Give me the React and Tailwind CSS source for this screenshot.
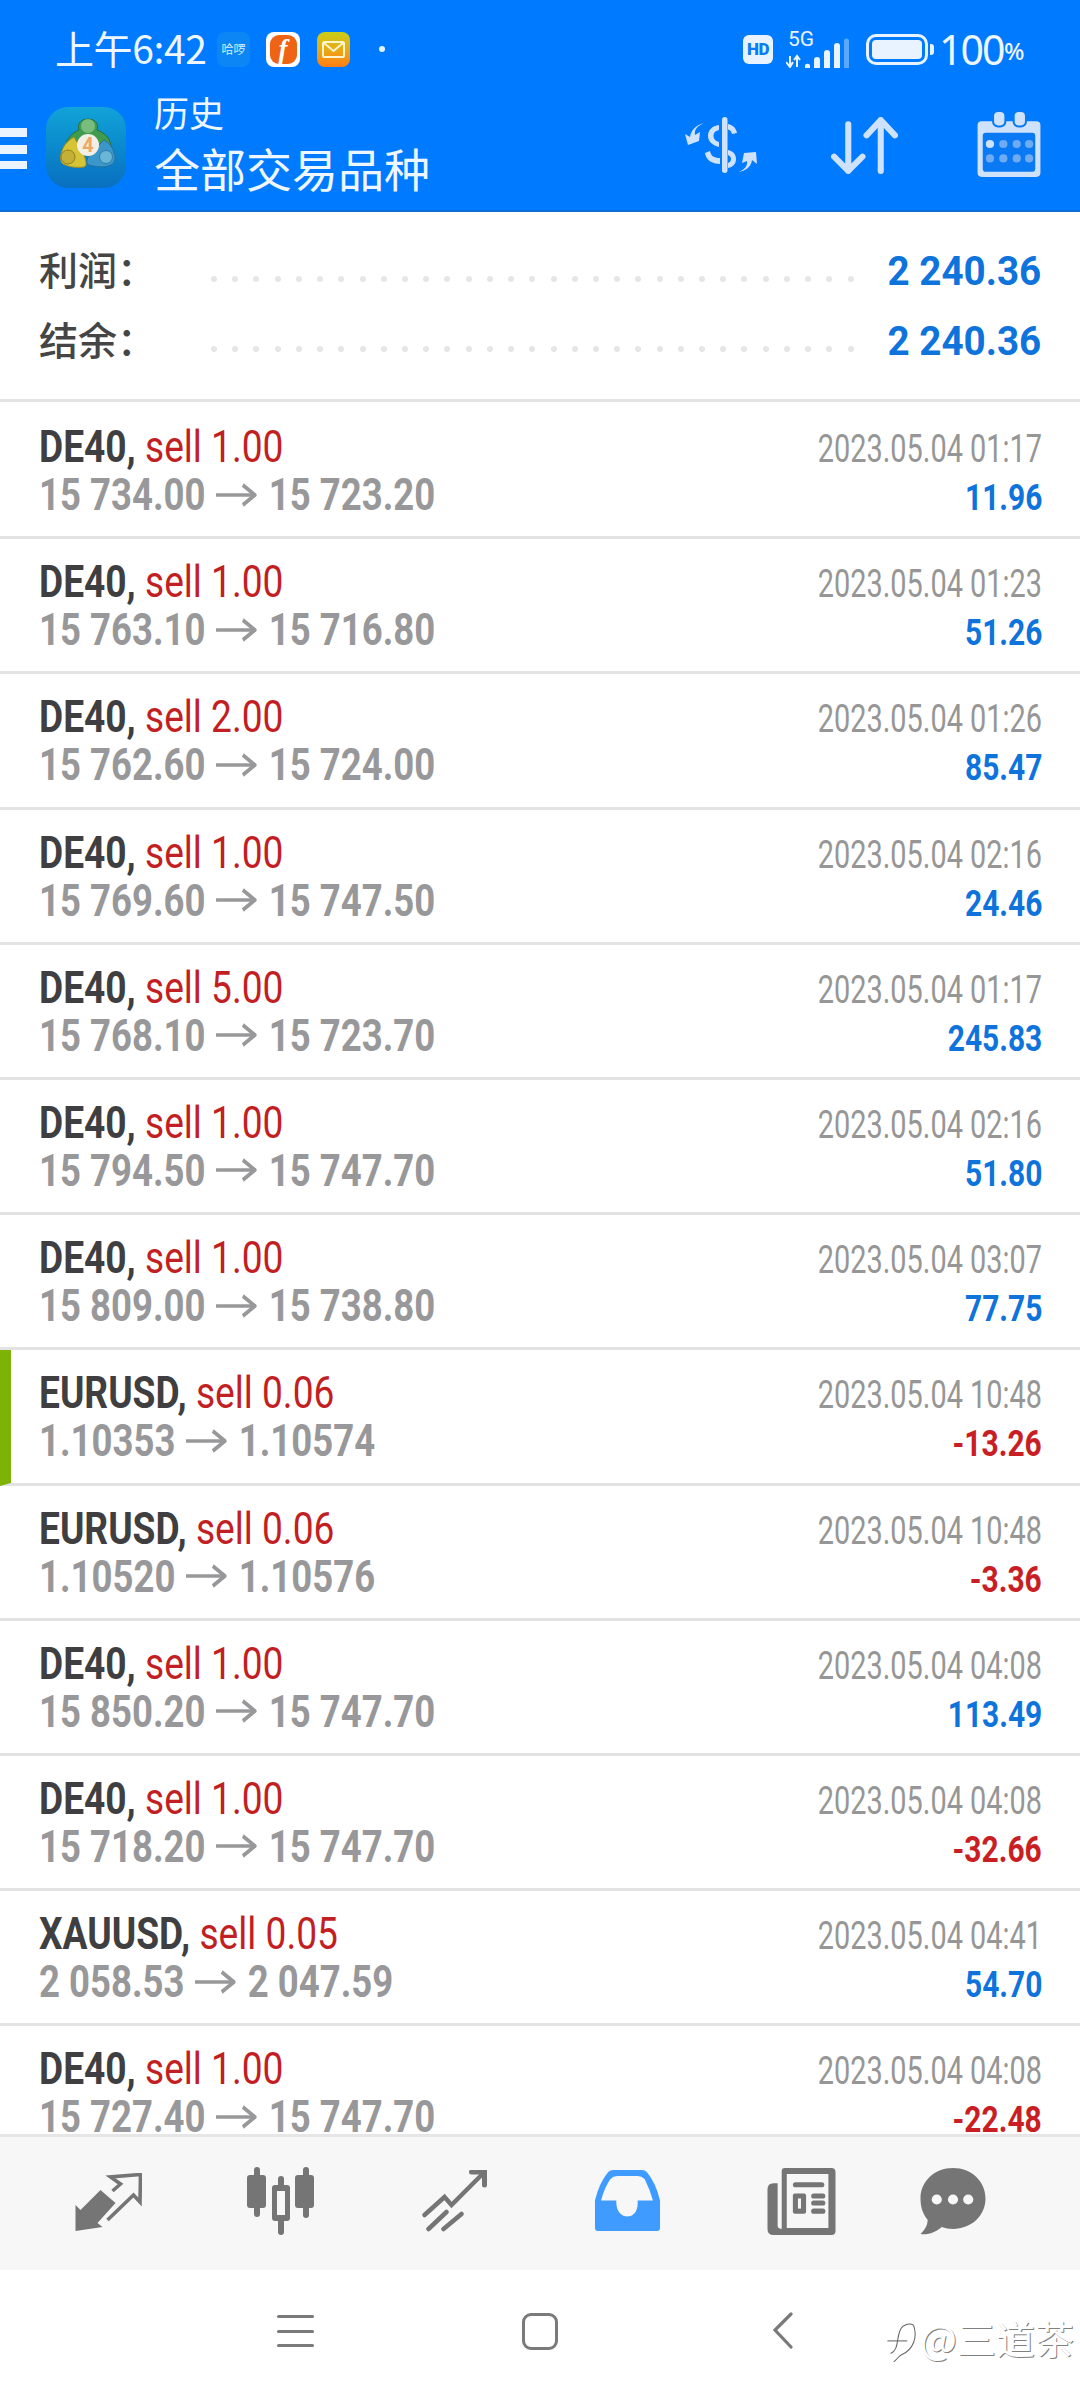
import React from "react";

const ROWS = [
  ["DE40", "sell 1.00", "15 734.00", "15 723.20", "2023.05.04 01:17", "11.96"],
  ["DE40", "sell 1.00", "15 763.10", "15 716.80", "2023.05.04 01:23", "51.26"],
  ["DE40", "sell 2.00", "15 762.60", "15 724.00", "2023.05.04 01:26", "85.47"],
  ["DE40", "sell 1.00", "15 769.60", "15 747.50", "2023.05.04 02:16", "24.46"],
  ["DE40", "sell 5.00", "15 768.10", "15 723.70", "2023.05.04 01:17", "245.83"],
  ["DE40", "sell 1.00", "15 794.50", "15 747.70", "2023.05.04 02:16", "51.80"],
  ["DE40", "sell 1.00", "15 809.00", "15 738.80", "2023.05.04 03:07", "77.75"],
  ["EURUSD", "sell 0.06", "1.10353", "1.10574", "2023.05.04 10:48", "-13.26", true],
  ["EURUSD", "sell 0.06", "1.10520", "1.10576", "2023.05.04 10:48", "-3.36"],
  ["DE40", "sell 1.00", "15 850.20", "15 747.70", "2023.05.04 04:08", "113.49"],
  ["DE40", "sell 1.00", "15 718.20", "15 747.70", "2023.05.04 04:08", "-32.66"],
  ["XAUUSD", "sell 0.05", "2 058.53", "2 047.59", "2023.05.04 04:41", "54.70"],
  ["DE40", "sell 1.00", "15 727.40", "15 747.70", "2023.05.04 04:08", "-22.48"],
];

const CJK = "font-['Noto_Sans_CJK_SC','Noto_Sans',sans-serif]";

function Arrow() {
  return (
    <svg width="50" height="24" viewBox="0 0 50 24" className="ml-[13px] mr-[15px] shrink-0" fill="none" stroke="#98989a" strokeWidth="3.6">
      <path d="M0 12H47" />
      <path d="M33 2L48 12L33 22" strokeWidth="4" />
    </svg>
  );
}

function Row({ r }) {
  const [sym, side, a, b, date, val, mark] = r;
  const neg = val.startsWith("-");
  return (
    <div className={`flex justify-between shrink-0 h-[135.2px] border-b-[3px] border-[#e3e3e3] pr-[38px] pt-[19px] ${mark ? "border-l-[11px] border-l-[#7cb305] pl-[28px]" : "pl-[39px]"}`}>
      <div className="flex flex-col">
        <div className="origin-left scale-x-[0.825] whitespace-nowrap text-[45px] leading-[47px] h-[47px]">
          <span className="font-bold text-[#3f3f41]">{sym}, </span>
          <span className="text-[#c21f24]">{side}</span>
        </div>
        <div className="origin-left scale-x-[0.812] mt-[1px] flex items-center whitespace-nowrap text-[45px] leading-[47px] h-[47px] font-bold text-[#98989a]">
          <span>{a}</span>
          <Arrow />
          <span>{b}</span>
        </div>
      </div>
      <div className="flex flex-col items-end mt-[3px]">
        <div className="origin-right scale-x-[0.76] whitespace-nowrap text-[38px] leading-[47px] h-[47px] text-[#969696]">{date}</div>
        <div className={`origin-right scale-x-[0.82] whitespace-nowrap text-[36.5px] leading-[47px] h-[47px] mt-[1px] font-bold ${neg ? "text-[#c81e24]" : "text-[#0f73dc]"}`}>{val}</div>
      </div>
    </div>
  );
}

function SummaryRow({ label }) {
  return (
    <div className="flex items-center h-[70px]">
      <div className={`${CJK} w-[172px] shrink-0 -mt-[6px] text-[39px] leading-[70px] font-medium text-[#454545]`}>{label}：</div>
      <div className="w-[643px] shrink-0 flex justify-between mt-[16px]">
        {Array.from({ length: 31 }, (_, i) => (
          <span key={i} className="w-[6px] h-[6px] rounded-full bg-[#e6e6e6]" />
        ))}
      </div>
      <div className="ml-auto mt-[2px] origin-right scale-x-[0.965] text-[40px] leading-[70px] font-bold text-[#0f73dc] whitespace-nowrap">2 240.36</div>
    </div>
  );
}

function Logo() {
  return (
    <div className="relative w-[80px] h-[81px] rounded-[22px] bg-gradient-to-b from-[#12a3d8] to-[#0a6fc0] overflow-hidden shrink-0">
      <svg width="80" height="81" viewBox="0 0 80 81" className="absolute left-0 top-0">
        <path d="M42 12c8 0 11 6 9 11 8 3 13 8 14 16l-14 0-9-2-10 2-12-1c1-7 6-12 13-15-2-5 1-11 9-11z" fill="#3f9b4e" stroke="#2a6f39" strokeWidth="1" />
        <circle cx="42" cy="19" r="7" fill="#78bd7c" />
        <path d="M28 30c-5 3-10 7-12 14 -2 4-2 11 1 13 6 3 13 4 21 3 4-1 2-8-2-16z" fill="#d5c435" stroke="#9b8a26" strokeWidth="1" />
        <circle cx="22" cy="50" r="7" fill="#c4b035" stroke="#8f7f22" strokeWidth="1" />
        <path d="M58 33c5 3 9 7 10 13 2 5 1 10-3 12-7 3-15 2-22 0-4-1-2-8 2-12z" fill="#3b97c9" stroke="#24709f" strokeWidth="1" />
        <circle cx="60" cy="50" r="6.5" fill="#69b6d6" stroke="#2f7ea8" strokeWidth="1" />
        <circle cx="42" cy="38" r="11" fill="#f4efe6" />
      </svg>
      <span className="absolute left-[2px] right-[-2px] top-[27px] text-center text-[20px] leading-[22px] font-bold text-[#eda866] font-['Roboto',sans-serif]">4</span>
    </div>
  );
}

function StatusBar() {
  return (
    <div className="flex items-center h-[98px] pl-[55px] pr-[55px] text-[#eef6ff]">
      <span className={`${CJK} -mt-[4px] text-[39px] leading-[98px] whitespace-nowrap tracking-[-0.4px] w-[162px] shrink-0`}>上午6:42</span>
      <div className="w-[33px] h-[35px] rounded-[8px] bg-[#0d86f5] flex items-center justify-center shrink-0">
        <span className={`${CJK} text-[12px] leading-none text-[#d9ecff] whitespace-nowrap`}>哈啰</span>
      </div>
      <div className="ml-[16px] w-[34px] h-[35px] rounded-[8px] bg-white flex items-center justify-center shrink-0">
        <div className="w-[27px] h-[29px] rounded-[9px] bg-[#ef6414] flex items-center justify-center">
          <span className="font-['Liberation_Serif',serif] italic font-bold text-[27px] leading-none text-white">f</span>
        </div>
      </div>
      <div className="ml-[17px] w-[33px] h-[35px] rounded-[8px] bg-gradient-to-b from-[#c7cf17] to-[#ff7d14] flex items-center justify-center shrink-0">
        <svg width="23" height="17" viewBox="0 0 23 17" fill="none" stroke="#fff6cf" strokeWidth="2"><rect x="1" y="1" width="21" height="15" rx="1.5" /><path d="M2 2l9.5 8L21 2" /></svg>
      </div>
      <span className="ml-[29px] w-[6px] h-[6px] rounded-full bg-[#e4f1ff] shrink-0" />
      <div className="ml-auto flex items-center">
        <div className="w-[30px] h-[29px] rounded-[6px] bg-[#e8f3ff] flex items-center justify-center">
          <span className="font-['Roboto',sans-serif] font-black text-[17px] leading-none text-[#0a7cf5] tracking-[-0.5px]">HD</span>
        </div>
        <div className="relative ml-[13px] w-[66px] h-[37px]">
          <span className="absolute left-[2px] top-[-3px] font-['Roboto',sans-serif] text-[21px] leading-[22px] text-[#eaf4ff]">5G</span>
          <svg width="66" height="37" viewBox="0 0 66 37" className="absolute left-0 top-0">
            <path d="M4 25v11M0 31l4 5 3-5" fill="none" stroke="#eaf4ff" strokeWidth="2" />
            <path d="M11 36V25M8 29l3-4 3 4" fill="none" stroke="#eaf4ff" strokeWidth="2" />
            <path d="M19 37v-3a3 3 0 0 1 5 0v3zM28 37V29a3 3 0 0 1 6 0v8zM38 37V22a3 3 0 0 1 6 0v15zM48 37V15a3 3 0 0 1 6 0v22z" fill="#eaf4ff" />
            <path d="M58 37V10a2.5 2.5 0 0 1 5 0v27z" fill="#5aa9fb" />
          </svg>
        </div>
        <div className="ml-[14px] w-[62px] h-[31px] rounded-[10px] border-[3px] border-[#e8f3ff] p-[3px] flex">
          <div className="flex-1 rounded-[4px] bg-[#e8f3ff]" />
        </div>
        <div className="ml-[2px] w-[4px] h-[11px] rounded-r-[3px] bg-[#e8f3ff]" />
        <span className="ml-[5px] font-['Noto_Sans',sans-serif] text-[41px] leading-[98px] tracking-[-2px] w-[65px] shrink-0">100</span>
        <span className="font-['Noto_Sans',sans-serif] font-medium text-[24px] leading-[98px] mt-[4px] tracking-[-1px] w-[21px]">%</span>
      </div>
    </div>
  );
}

function ToolBar() {
  const c = "#cfe2fb";
  return (
    <div className="flex items-start h-[114px] pt-[2px] border-b-[2px] border-[#0e6ed6] text-[#eef6ff]">
      <div className="w-[27px] h-[41px] mt-[28px] flex flex-col justify-between shrink-0">
        <span className="h-[9px] bg-[#eaf4ff]" /><span className="h-[9px] bg-[#eaf4ff]" /><span className="h-[8px] bg-[#eaf4ff]" />
      </div>
      <div className="ml-[19px] mt-[7px]"><Logo /></div>
      <div className={`${CJK} ml-[28px] flex flex-col whitespace-nowrap -mt-[6px]`}>
        <span className="text-[35px] leading-[36px]">历史</span>
        <span className="text-[46px] leading-[56px] mt-[9px]">全部交易品种</span>
      </div>
      <div className="ml-auto flex items-start pr-[39px]">
        <svg width="72" height="56" viewBox="0 0 72 56" fill={c} className="mt-[17px] mr-[74px]">
          <rect x="37" y="0" width="5.5" height="56" rx="2.7" />
          <path d="M34 8C27 9 23 13 23 19C23 24 27 28 34 30V25C30 24 28.500 21 28.500 19C28.500 16 30 14 34 13Z" />
          <path d="M43 7C48 8 51 11 52 16L47 17C46 14 45 13 43 12.500Z" />
          <path d="M43 33C48 34 51 37 51 42C51 47 48 50 43 51V46C45 45 46 44 46 42C46 40 45 39 43 38Z" />
          <path d="M20 36L25 34C26 39 29 41 35 41V47C27 47 21 43 20 36Z" />
          <path d="M19 7C12 10 9 14 10 19L15 16L14 25L3 29L0 18L5 21C6 14 11 9 19 7Z" transform="translate(0 -1)" />
          <path d="M53 55C59 53 63 49 62 44L57 46L59 36L71 35L72 47L67 43C66 50 61 54 53 55Z" />
        </svg>
        <svg width="67" height="61" viewBox="0 0 66 60" fill="none" stroke={c} strokeWidth="6" strokeLinecap="round" strokeLinejoin="round" className="mt-[15px] mr-[79px]">
          <path d="M17 9V55M3 41L17 55L31 41" />
          <path d="M49 55V5M35 20L49 5L63 20" />
        </svg>
        <svg width="64" height="68" viewBox="0 0 61 66" className="mt-[10px]">
          <rect x="0" y="11" width="61" height="54" rx="4" fill={c} />
          <rect x="5" y="22" width="51" height="38" rx="3" fill="#0a79f4" />
          <rect x="15" y="1" width="12" height="15" rx="5" fill={c} stroke="#0a79f4" strokeWidth="2" />
          <rect x="35" y="1" width="12" height="15" rx="5" fill={c} stroke="#0a79f4" strokeWidth="2" />
          <circle cx="12" cy="33" r="4" fill={c} />
          {[25, 38, 50].map((x) => <circle key={x} cx={x} cy="33" r="4" fill="#6fabf3" />)}
          {[12, 25, 38, 50].map((x) => <circle key={x} cx={x} cy="47" r="4" fill="#6fabf3" />)}
        </svg>
      </div>
    </div>
  );
}

const G = "#757575";

function BottomTabs() {
  return (
    <div className="shrink-0 h-[136px] border-t-[3px] border-[#e6e6e6] bg-[#f7f7f7] flex items-start pl-[75px] pt-[29px]">
      <svg width="67" height="58" viewBox="10 13 66 58" className="mt-[7px]">
        <path d="M10 71V45L15 50L35 30L50 43L32 63L37 67Z" fill={G} />
        <path d="M47 31L55 24L45 17L75 14.500L74.500 42L68 35L42 60" fill="none" stroke={G} strokeWidth="3.6" />
      </svg>
      <svg width="70" height="68" viewBox="0 0 68 68" fill={G} className="ml-[104px] mt-[1px]">
        <rect x="7" y="0" width="6" height="50" rx="3" />
        <rect x="0" y="8" width="19" height="33" rx="3" />
        <rect x="56" y="0" width="6" height="51" rx="3" />
        <rect x="48" y="8" width="19" height="33" rx="3" />
        <rect x="31" y="9" width="6" height="59" rx="3" />
        <rect x="25" y="18" width="18" height="36" rx="3" />
        <rect x="30" y="24" width="8" height="24" fill="#f7f7f7" />
      </svg>
      <svg width="67" height="62" viewBox="0 0 64 62" fill="none" stroke={G} strokeWidth="4.500" strokeLinecap="round" className="ml-[105px] mt-[4px]">
        <path d="M2 45L22 27L29 35L60 4" />
        <path d="M49 2H62V15" strokeWidth="5" />
        <path d="M6 59L24 42M21 59L39 44" />
      </svg>
      <svg width="67" height="62" viewBox="0 0 64 61" className="ml-[106px] mt-[4px]">
        <path d="M13 2Q15 0 18 0H46Q49 0 51 2Q60 13 64 30V57Q64 60 61 60H3Q0 60 0 57V30Q4 13 13 2Z" fill="#3f9bff" />
        <path d="M22 6H42Q46 6 49 9Q54 19 57 30H42V33C42 50 22 50 21 33V30H6Q9 18 15 9Q18 6 22 6Z" fill="#f7f7f7" />
      </svg>
      <svg width="69" height="67" viewBox="0 0 67 66" className="ml-[106px] mt-[2px]">
        <path d="M14 3Q14 0 17 0H63Q67 0 67 4V62Q67 66 63 66H6Q0 66 0 60V21Q0 15 6 15H10V57Q10 60 14 60Z" fill={G} fillRule="evenodd" />
        <path d="M19 6H60V59H19Z" fill="#f7f7f7" />
        <rect x="25" y="14" width="31" height="5" rx="2.500" fill={G} />
        <rect x="25" y="25" width="13" height="20" rx="2" fill={G} />
        <rect x="30" y="30" width="3" height="10" fill="#f7f7f7" />
        <rect x="43" y="25" width="14" height="5" rx="2.500" fill={G} />
        <rect x="43" y="32" width="14" height="5" rx="2.500" fill={G} />
        <rect x="43" y="40" width="14" height="5" rx="2.500" fill={G} />
      </svg>
      <svg width="66" height="67" viewBox="0 0 64 66" className="ml-[84px] mt-[2px]">
        <path d="M32 0C50 0 64 13 64 30C64 47 50 60 32 60C28 60 24 59 21 58C15 63 8 66 0 65C4 61 7 57 7 51C2 45 0 38 0 30C0 13 14 0 32 0Z" fill={G} />
        <circle cx="16" cy="31" r="5" fill="#f7f7f7" />
        <circle cx="32" cy="31" r="5" fill="#f7f7f7" />
        <circle cx="47" cy="31" r="5" fill="#f7f7f7" />
      </svg>
    </div>
  );
}

function SystemNav() {
  return (
    <div className="relative flex-1 bg-white flex items-start pl-[277px] pt-[45px]">
      <div className="w-[37px] h-[32px] flex flex-col justify-between">
        <span className="h-[3px] rounded-full bg-[#7a7a7a]" /><span className="h-[3px] rounded-full bg-[#7a7a7a]" /><span className="h-[3px] rounded-full bg-[#7a7a7a]" />
      </div>
      <div className="ml-[208px] -mt-[2px] w-[36px] h-[37px] rounded-[9px] border-[3px] border-[#7a7a7a]" />
      <svg width="20" height="37" viewBox="0 0 20 37" fill="none" stroke="#7a7a7a" strokeWidth="3.2" strokeLinecap="round" className="ml-[215px] -mt-[3px]">
        <path d="M18 2L2 18L18 35" />
      </svg>
      <div className="absolute left-[882px] top-[44px] flex items-start">
        <svg width="38" height="46" viewBox="0 0 32 44" fill="none" stroke="#666" strokeWidth="1" className="mt-[6px]">
          <path d="M28 5C32 16 28 28 17 33C13 35 12 38 9 40" />
          <path d="M18 6C15 8 14 12 13 18C12 25 11 30 6 32" />
          <path d="M3 20H22" />
          <path d="M18 6C21 4 25 3 28 5" />
        </svg>
        <span className={`${CJK} text-[39px] leading-[46px] whitespace-nowrap text-white [text-shadow:1px_1px_0_#808080]`}>@三道茶</span>
      </div>
    </div>
  );
}

export default function App() {
  return (
    <div className="w-[1080px] h-[2400px] flex flex-col bg-white overflow-hidden font-['Roboto',sans-serif]">
      <div className="shrink-0 bg-[#007aff]">
        <StatusBar />
        <ToolBar />
      </div>
      <div className="shrink-0 h-[190px] border-b-[3px] border-[#e3e3e3] pl-[39px] pr-[39px] pt-[24px] flex flex-col">
        <SummaryRow label="利润" />
        <SummaryRow label="结余" />
      </div>
      <div className="h-[1732px] shrink-0 overflow-hidden flex flex-col pt-[2px]">
        {ROWS.map((r, i) => <Row key={i} r={r} />)}
      </div>
      <BottomTabs />
      <SystemNav />
    </div>
  );
}
